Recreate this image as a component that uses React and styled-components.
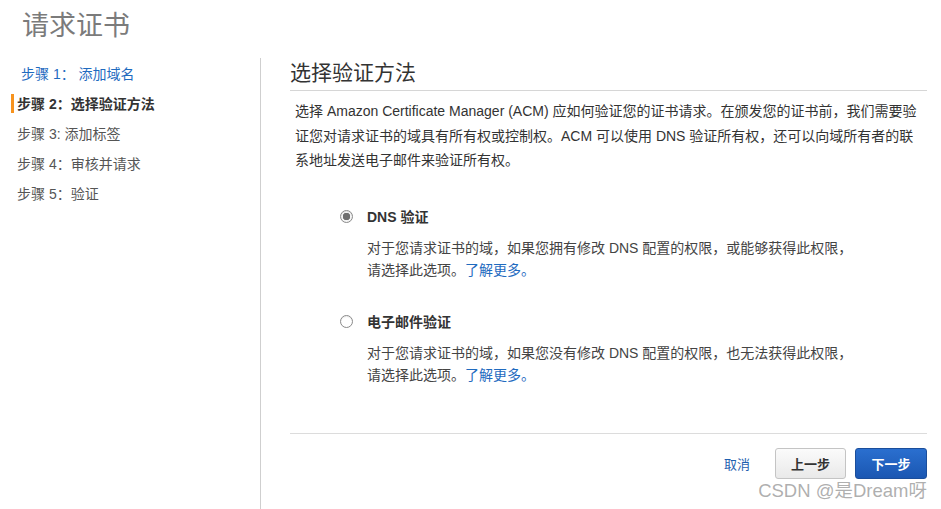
import React from "react";
import styled, { createGlobalStyle } from "styled-components";

const Global = createGlobalStyle`
  html, body { margin: 0; padding: 0; background: #fff; }
  body {
    font-family: "Liberation Sans", "Noto Sans CJK SC", sans-serif;
    color: #444;
    -webkit-font-smoothing: antialiased;
  }
`;

const Page = styled.div`
  position: relative;
  width: 941px;
  height: 509px;
  overflow: hidden;
  display: flex;
  flex-direction: column;
`;

const Header = styled.header`
  height: 58px;
  padding-left: 22px;
  box-sizing: border-box;
`;

const Title = styled.h1`
  margin: 0;
  padding-top: 10px;
  font-size: 27px;
  line-height: 32px;
  font-weight: 400;
  color: #7b7b7b;
`;

const Body = styled.div`
  flex: 1;
  display: flex;
`;

const Sidebar = styled.nav`
  width: 260px;
  border-right: 1px solid #cfcfcf;
  padding-top: 0;
  display: flex;
  flex-direction: column;
`;

const Step = styled.div`
  margin-left: 11px;
  display: flex;
  align-items: center;
  font-size: 14px;
  white-space: pre;
  box-sizing: border-box;
  padding-left: ${(p) => (p.$active ? "3px" : p.$link ? "10px" : "6px")};
  border-left: ${(p) => (p.$active ? "3px solid #f7931e" : "none")};
  color: ${(p) => (p.$link ? "#1f6bbf" : p.$active ? "#333" : "#555")};
  font-weight: ${(p) => (p.$active ? 700 : 400)};
  height: ${(p) => (p.$active ? "19px" : "30px")};
  margin-top: ${(p) => (p.$active ? "5.5px" : "0")};
  margin-bottom: ${(p) => (p.$active ? "5.5px" : "0")};
`;

const Content = styled.main`
  flex: 1;
  padding: 0 14px 0 29px;
  display: flex;
  flex-direction: column;
`;

const Heading = styled.h2`
  margin: 0;
  height: 33px;
  box-sizing: border-box;
  border-bottom: 1px solid #d6d6d6;
  font-size: 21px;
  line-height: 30px;
  font-weight: 400;
  color: #333;
`;

const Intro = styled.p`
  margin: 8px 0 0 5px;
  font-size: 14px;
  line-height: 24.5px;
  color: #333;
`;

const Options = styled.div`
  margin-top: 33px;
  padding-left: 50px;
  display: flex;
  flex-direction: column;
  gap: 30px;
  height: 227px;
`;

const Option = styled.div`
  display: grid;
  grid-template-columns: 27px 1fr;
  row-gap: 9px;
`;

const Radio = styled.span`
  width: 11px;
  height: 11px;
  margin-top: 4px;
  border-radius: 50%;
  border: 1px solid #8a8a8a;
  background: ${(p) => (p.$checked ? "radial-gradient(circle, #6e6e6e 0 3.5px, #f4f4f4 4px)" : "#fff")};
  box-shadow: inset 0 1px 1px rgba(0, 0, 0, 0.08);
`;

const OptionLabel = styled.div`
  font-size: 14px;
  font-weight: 700;
  line-height: 22px;
  color: #333;
`;

const OptionDesc = styled.div`
  grid-column: 2;
  font-size: 14px;
  line-height: 22px;
  color: #444;
  max-width: 490px;
`;

const Link = styled.a`
  color: #1f6bbf;
  text-decoration: none;
  cursor: pointer;
`;

const Footer = styled.div`
  border-top: 1px solid #dcdcdc;
  padding-top: 14px;
  display: flex;
  justify-content: flex-end;
  align-items: center;
  gap: 9px;
`;

const Cancel = styled.a`
  color: #1f5fb0;
  font-size: 13px;
  font-weight: 400;
  margin-right: 16px;
  cursor: pointer;
`;

const Button = styled.button`
  width: ${(p) => (p.$primary ? "72px" : "71px")};
  height: 31px;
  border-radius: 3px;
  font-family: inherit;
  font-size: 13px;
  font-weight: 700;
  cursor: pointer;
  border: 1px solid ${(p) => (p.$primary ? "#1b4e9b" : "#c4c4c4")};
  color: ${(p) => (p.$primary ? "#fff" : "#333")};
  background: ${(p) =>
    p.$primary
      ? "linear-gradient(#2a6fcf, #1b57b2)"
      : "linear-gradient(#fbfbfb, #e9e9e9)"};
`;

const Watermark = styled.div`
  position: absolute;
  right: 14px;
  bottom: 7px;
  font-size: 18.5px;
  color: rgba(140, 140, 140, 0.7);
  font-family: "Liberation Sans", "Noto Sans CJK SC", sans-serif;
  text-shadow: 0 0 1px rgba(255, 255, 255, 0.8);
`;

export default function App() {
  return (
    <Page>
      <Global />
      <Header>
        <Title>请求证书</Title>
      </Header>
      <Body>
        <Sidebar>
          <Step $link>步骤 1： 添加域名</Step>
          <Step $active>步骤 2：选择验证方法</Step>
          <Step>步骤 3: 添加标签</Step>
          <Step>步骤 4：审核并请求</Step>
          <Step>步骤 5：验证</Step>
        </Sidebar>
        <Content>
          <Heading>选择验证方法</Heading>
          <Intro>
            选择 Amazon Certificate Manager (ACM) 应如何验证您的证书请求。在颁发您的证书前，我们需要验
            <br />
            证您对请求证书的域具有所有权或控制权。ACM 可以使用 DNS 验证所有权，还可以向域所有者的联
            <br />
            系地址发送电子邮件来验证所有权。
          </Intro>
          <Options>
            <Option>
              <Radio $checked />
              <OptionLabel>DNS 验证</OptionLabel>
              <OptionDesc>
                对于您请求证书的域，如果您拥有修改 DNS 配置的权限，或能够获得此权限，
                <br />
                请选择此选项。<Link>了解更多。</Link>
              </OptionDesc>
            </Option>
            <Option>
              <Radio />
              <OptionLabel>电子邮件验证</OptionLabel>
              <OptionDesc>
                对于您请求证书的域，如果您没有修改 DNS 配置的权限，也无法获得此权限，
                <br />
                请选择此选项。<Link>了解更多。</Link>
              </OptionDesc>
            </Option>
          </Options>
          <Footer>
            <Cancel>取消</Cancel>
            <Button>上一步</Button>
            <Button $primary>下一步</Button>
          </Footer>
        </Content>
      </Body>
      <Watermark>CSDN @是Dream呀</Watermark>
    </Page>
  );
}
